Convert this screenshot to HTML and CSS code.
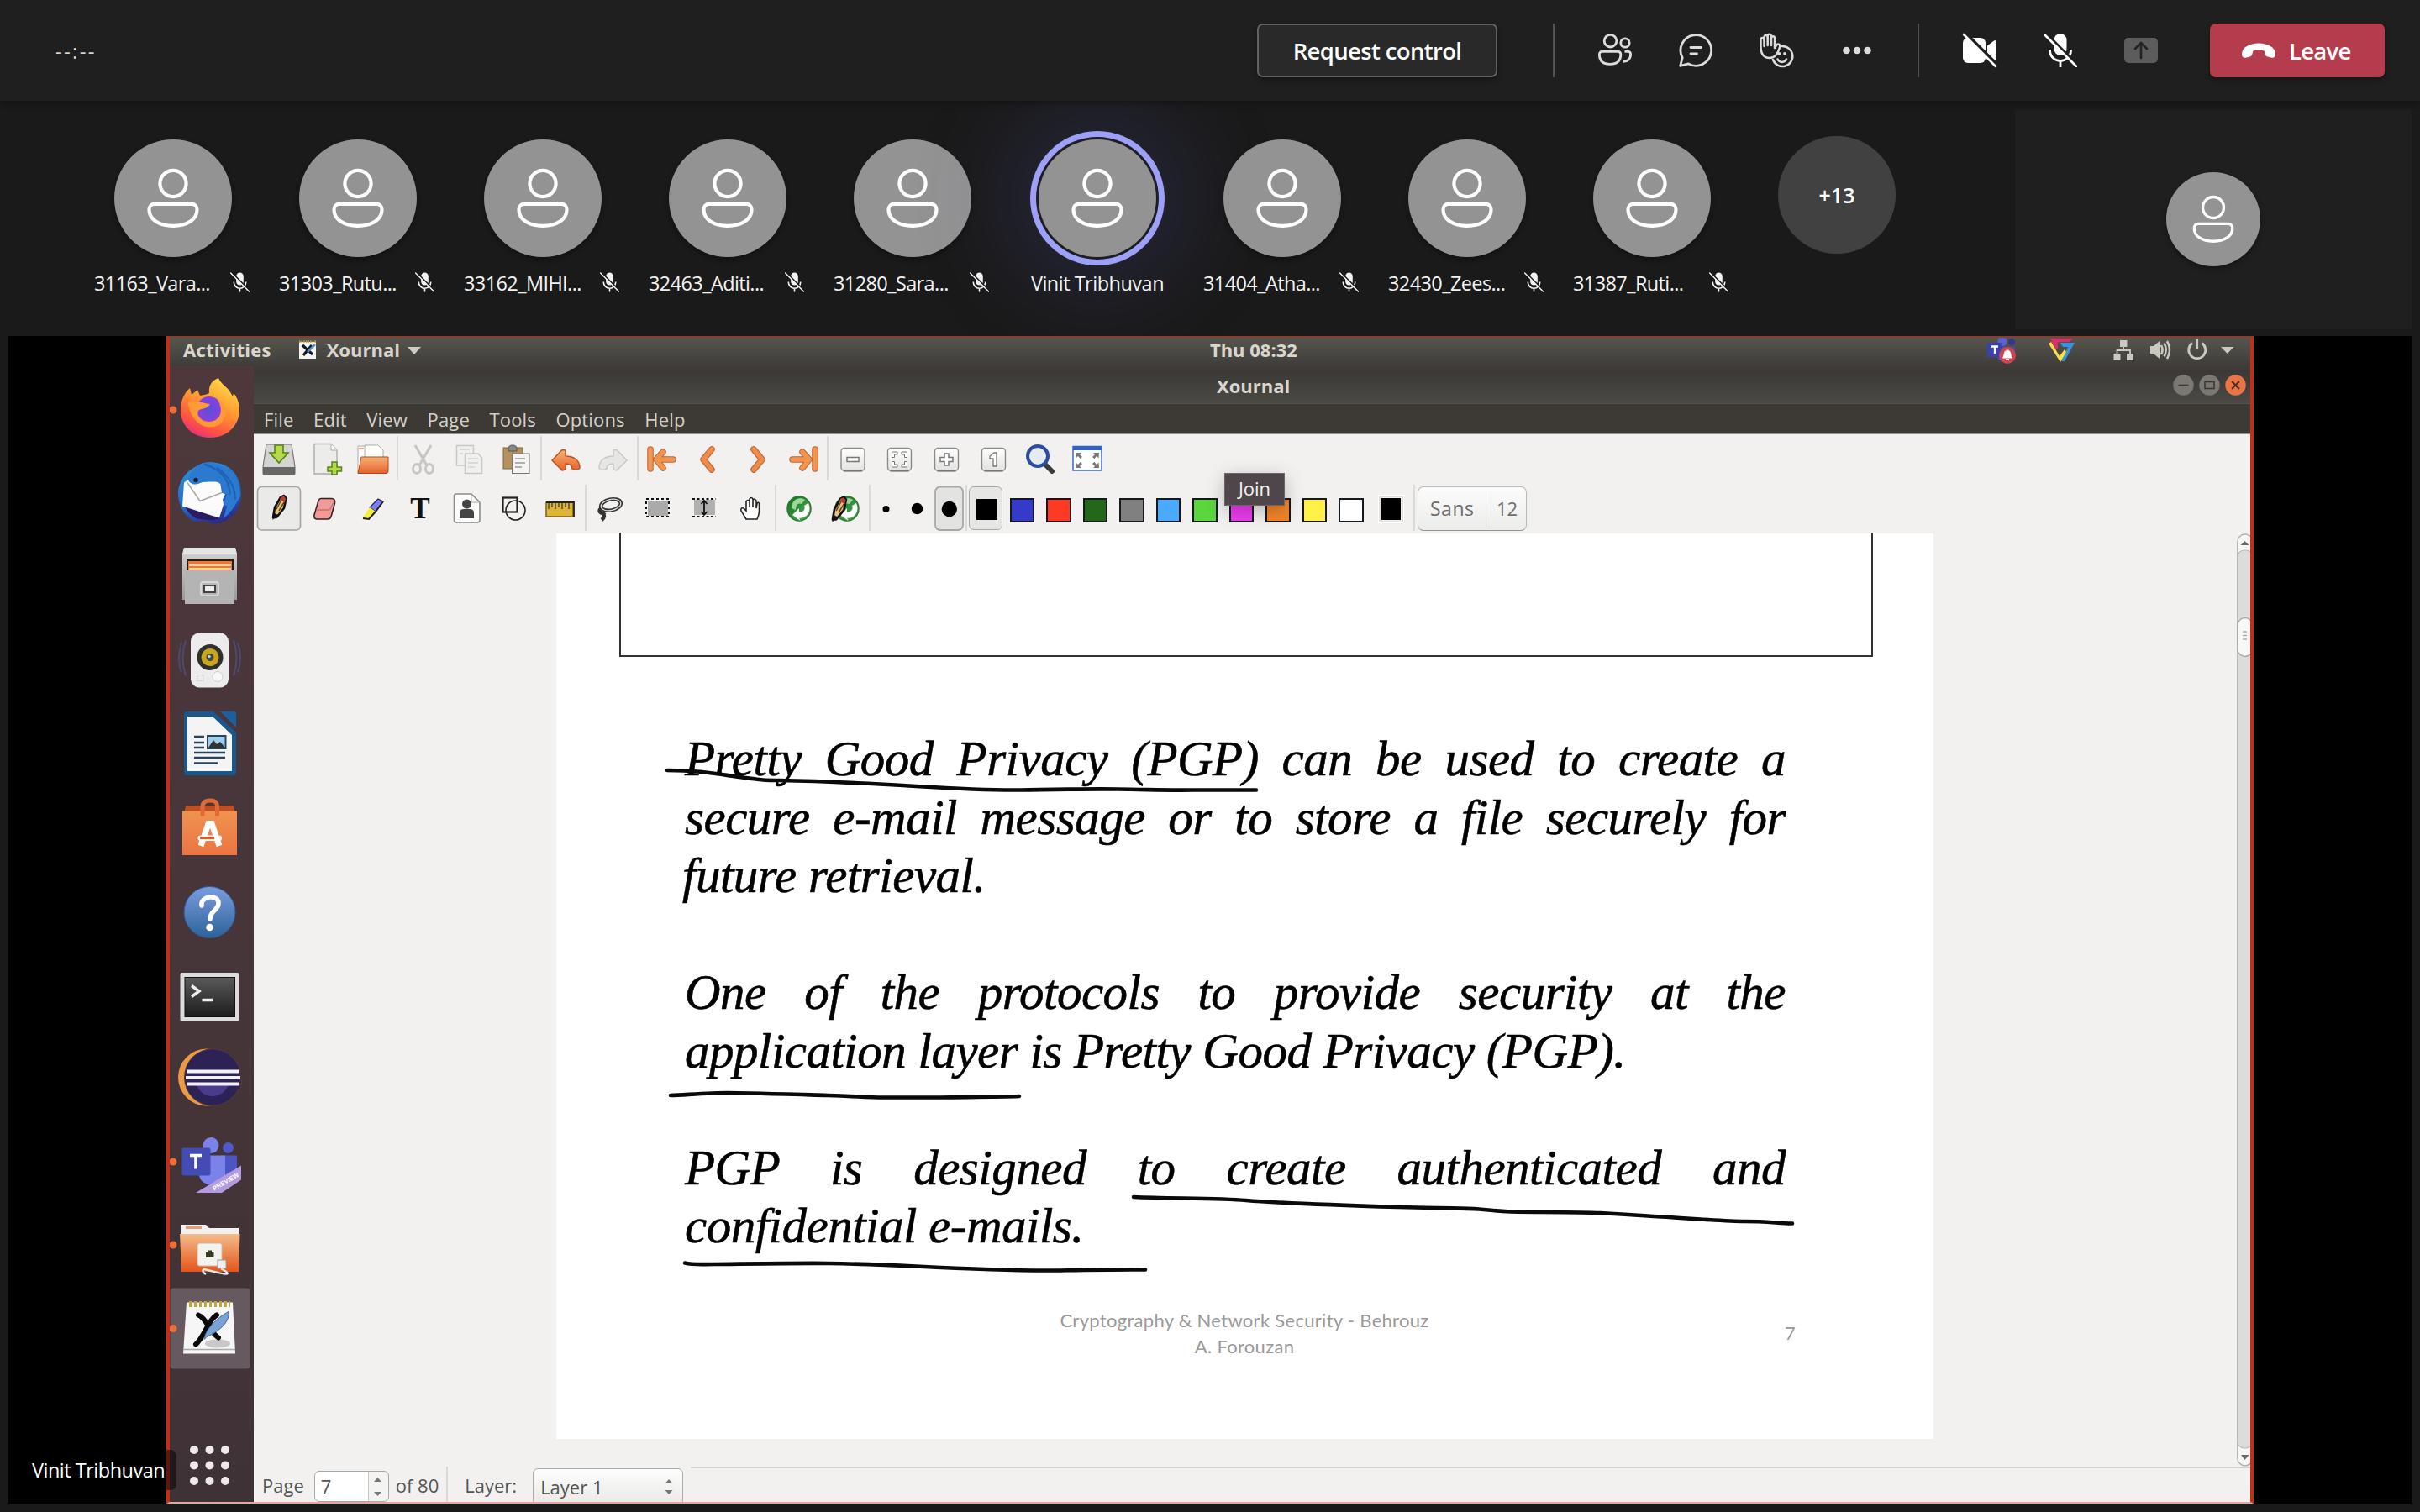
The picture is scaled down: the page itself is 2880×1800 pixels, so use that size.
FILE: index.html
```html
<!DOCTYPE html>
<html lang="en">
<head>
<meta charset="utf-8">
<title>Meeting</title>
<link rel="stylesheet" href="styles.css">
</head>
<body>
<svg class="defs" aria-hidden="true">
  <defs>
    <symbol id="person" viewBox="-70 -70 140 140">
      <g fill="none" stroke="#fff" stroke-width="4.2">
        <circle cx="0" cy="-17.5" r="15.6"/>
        <path d="M-22 6.8H22C26 6.8 28.5 9.5 28.5 13.5C28.5 25 17 32.8 0 32.8S-28.5 25 -28.5 13.5C-28.5 9.5 -26 6.8 -22 6.8Z"/>
      </g>
    </symbol>
    <symbol id="micoff" viewBox="-20 -20 40 40">
      <rect x="-7.5" y="-20" width="15" height="26" rx="7.5" fill="currentColor"/>
      <path d="M-12.5 -1V0A12.5 12.5 0 0 0 12.5 0V-1M0 12.5V20" fill="none" stroke="currentColor" stroke-width="2.8"/>
      <path d="M-17.5 -20.5L21 18" stroke="var(--cut,#1f1f1f)" stroke-width="3.4"/>
      <path d="M-19 -19L19 19" stroke="currentColor" stroke-width="2.6" stroke-linecap="round"/>
    </symbol>
    <linearGradient id="orange" x1="0" y1="0" x2="0" y2="1"><stop offset="0" stop-color="#f9b375"/><stop offset="1" stop-color="#e4622c"/></linearGradient>
    <linearGradient id="folder" x1="0" y1="0" x2="0" y2="1"><stop offset="0" stop-color="#f3bd8c"/><stop offset="1" stop-color="#e5541a"/></linearGradient>
    <linearGradient id="key" x1="0" y1="0" x2="0" y2="1"><stop offset="0" stop-color="#fff"/><stop offset="1" stop-color="#e2e2e0"/></linearGradient>
    <linearGradient id="steel" x1="0" y1="0" x2="0" y2="1"><stop offset="0" stop-color="#d5d5d5"/><stop offset="1" stop-color="#989898"/></linearGradient>
    <linearGradient id="fox" x1=".8" y1="0" x2=".3" y2="1"><stop offset="0" stop-color="#ffe04a"/><stop offset=".45" stop-color="#ff9a30"/><stop offset=".8" stop-color="#ff5343"/><stop offset="1" stop-color="#e8307a"/></linearGradient>
    <radialGradient id="globe"><stop offset="0" stop-color="#5b4fd8"/><stop offset="1" stop-color="#8a3fe0"/></radialGradient>
    <linearGradient id="bird" x1=".2" y1="0" x2=".6" y2="1"><stop offset="0" stop-color="#2b93dc"/><stop offset=".6" stop-color="#2468c6"/><stop offset="1" stop-color="#2a2a8c"/></linearGradient>
    <linearGradient id="ask" x1="0" y1="0" x2="0" y2="1"><stop offset="0" stop-color="#7b9de0"/><stop offset="1" stop-color="#2d6298"/></linearGradient>
    <linearGradient id="term" x1="0" y1="0" x2="0" y2="1"><stop offset="0" stop-color="#5a5a5a"/><stop offset="1" stop-color="#1c1c1c"/></linearGradient>
    <linearGradient id="bag" x1="0" y1="0" x2="0" y2="1"><stop offset="0" stop-color="#f09350"/><stop offset="1" stop-color="#ec7440"/></linearGradient>
    <linearGradient id="leaf" x1="0" y1="0" x2="1" y2="1"><stop offset="0" stop-color="#0c6d1c"/><stop offset="1" stop-color="#58b65a"/></linearGradient>
    <g id="pencil">
      <path d="M341 616L343 604L350 592L354 590L356.500 593L354 605L345 616Z" fill="#e8c27a" stroke="#111" stroke-width="2.600" stroke-linejoin="round"/>
      <path d="M345 606L351 595M348 608L354 598" stroke="#5f4a1c" stroke-width="1.500"/>
      <path d="M350 592L354 590.500L356 593.500L355 598L349 595Z" fill="#b8402c"/>
      <path d="M340.500 619L341 610L347 613Z" fill="#111"/>
    </g>
    <g id="recycle">
      <ellipse cx="951" cy="605.5" rx="14" ry="14.5" fill="url(#leaf)" stroke="#2c7a33" stroke-width="1.5"/>
      <path d="M942 605C942 594 952 591 958 595L954 600C950 598 947 601 947 607Z" fill="#9ad69a"/>
      <path d="M962 599C967 610 958 618 951 616.500L952.500 620L943 613L951 605L951 609.500C956 610 959 606 957 602Z" fill="#fff"/>
    </g>
    <g id="keycap"><rect x="-14" y="-13.5" width="28" height="27" rx="4" fill="url(#key)" stroke="#8b8b89" stroke-width="1.4"/><path d="M-11 13.6H11" stroke="#777" stroke-width="1.8"/></g>
  </defs>
</svg>

<header class="bar">
  <span class="timer t">--:--</span>
  <button class="request"><span class="t">Request control</span></button>
  <i class="rule"></i>
  <div class="tools">
    <svg class="tool" viewBox="-48 -32 96 64"><g fill="none" stroke="#dcdcdc" stroke-width="2.8"><circle cx="-5.5" cy="-11.3" r="7.3"/><circle cx="12" cy="-9" r="5.2"/><path d="M-15.5 1.4H3.5C5.5 1.4 6.8 2.8 6.8 4.8C6.8 12 3 16.4 -6 16.4S-18.6 12 -18.6 4.8C-18.6 2.8 -17.5 1.4 -15.5 1.4Z"/><path d="M11.5 1.4H15.8C17.8 1.4 18.6 2.6 18.6 4.8C18.6 10 15 13.6 9.5 13.4"/></g></svg>
    <svg class="tool" viewBox="-48 -32 96 64"><g fill="none" stroke="#dcdcdc" stroke-width="2.8" stroke-linecap="round" stroke-linejoin="round"><path d="M-18.3 18.3L-15.8 8.6A18.3 18.3 0 1 1 -8.6 15.9Z"/><path d="M-6 -3.5H6.5M-6 4H1.5"/></g></svg>
    <svg class="tool" viewBox="-48 -32 96 64"><g fill="none" stroke="#dcdcdc" stroke-width="2.5" stroke-linecap="round" stroke-linejoin="round"><path d="M-18.5 -5V-12.5C-18.5 -15.8 -14.5 -15.8 -14.5 -12.5V-15.5C-14.5 -19 -10.3 -19 -10.3 -15.5V-17C-10.3 -20 -6 -20 -6 -17V-14.5C-6 -17.5 -2 -17.5 -2 -14.5V-3L0 -6C1.5 -8.5 5 -7.5 4.2 -4.5C2.5 2 -1 9 -8 9C-15.5 9 -18.5 3 -18.5 -5Z"/><path d="M-14.5 -12V-5M-10.3 -15V-6M-6 -15V-6"/><path d="M7 -5A12 12 0 1 1 -4 11"/><path d="M1.5 10.5C3.5 15 10 15 12 10.5"/></g><circle cx="3.5" cy="4" r="1.9" fill="#dcdcdc"/><circle cx="10" cy="4" r="1.9" fill="#dcdcdc"/></svg>
    <svg class="tool" viewBox="-48 -32 96 64"><g fill="#dcdcdc"><circle cx="-12.5" cy="0" r="4.3"/><circle cx="0" cy="0" r="4.3"/><circle cx="12.5" cy="0" r="4.3"/></g></svg>
  </div>
  <i class="rule"></i>
  <div class="tools">
    <svg class="tool" viewBox="-48 -32 96 64"><rect x="-20" y="-15" width="27" height="30" rx="6" fill="#fff"/><path d="M9 -5.5L17 -11.5C18.5 -12.6 20 -12 20 -10V10C20 12 18.5 12.6 17 11.5L9 5.5Z" fill="#fff"/><path d="M-17 -20.5L22 18.5" stroke="#1f1f1f" stroke-width="4"/><path d="M-19 -19L19 19" stroke="#fff" stroke-width="2.6" stroke-linecap="round"/></svg>
    <svg class="tool white" viewBox="-48 -32 96 64"><use href="#micoff" x="-20" y="-20" width="40" height="40"/></svg>
    <svg class="tool" viewBox="-48 -32 96 64"><rect x="-20" y="-15" width="40" height="30" rx="5" fill="#5c5c5c"/><path d="M0 9V-8M-7 -2L0 -9L7 -2" fill="none" stroke="#232323" stroke-width="2.6" stroke-linecap="round" stroke-linejoin="round"/></svg>
  </div>
  <button class="leave"><svg viewBox="-20 -9 40 18"><path d="M0 -8.5C-11 -8.5 -20 -3.5 -20 4.5C-20 8.5 -17.5 9.3 -14.5 8.5L-10.5 7.5C-8.3 6.9 -7.8 5.5 -7.4 3.5L-6.8 .8C-2.5 -.9 2.5 -.9 6.8 .8L7.4 3.5C7.8 5.5 8.3 6.9 10.5 7.5L14.5 8.5C17.5 9.3 20 8.5 20 4.5C20 -3.5 11 -8.5 0 -8.5Z" fill="#fff"/></svg><span class="t">Leave</span></button>
</header>

<section class="strip">
  <div class="people">
    <div class="who"><svg class="face"><use href="#person"/></svg><p><span class="t">31163_Vara...</span><svg class="mic"><use href="#micoff"/></svg></p></div>
    <div class="who"><svg class="face"><use href="#person"/></svg><p><span class="t">31303_Rutu...</span><svg class="mic"><use href="#micoff"/></svg></p></div>
    <div class="who"><svg class="face"><use href="#person"/></svg><p><span class="t">33162_MIHI...</span><svg class="mic"><use href="#micoff"/></svg></p></div>
    <div class="who"><svg class="face"><use href="#person"/></svg><p><span class="t">32463_Aditi...</span><svg class="mic"><use href="#micoff"/></svg></p></div>
    <div class="who"><svg class="face"><use href="#person"/></svg><p><span class="t">31280_Sara...</span><svg class="mic"><use href="#micoff"/></svg></p></div>
    <div class="who speaking"><svg class="face"><use href="#person"/></svg><p><span class="t">Vinit Tribhuvan</span></p></div>
    <div class="who"><svg class="face"><use href="#person"/></svg><p><span class="t">31404_Atha...</span><svg class="mic"><use href="#micoff"/></svg></p></div>
    <div class="who"><svg class="face"><use href="#person"/></svg><p><span class="t">32430_Zees...</span><svg class="mic"><use href="#micoff"/></svg></p></div>
    <div class="who"><svg class="face"><use href="#person"/></svg><p><span class="t">31387_Ruti...</span><svg class="mic"><use href="#micoff"/></svg></p></div>
    <div class="more"><span class="t">+13</span></div>
  </div>
  <div class="self"><svg class="face small"><use href="#person"/></svg></div>
</section>

<main class="stage">
  <div class="screen">
    <div class="panel">
      <b class="act t">Activities</b>
      <svg class="appicon" viewBox="354 404 24 24"><rect x="356" y="407" width="20" height="20" fill="#f4f4f4"/><path d="M356 406.5H376" stroke="#b99a35" stroke-width="2.5" stroke-dasharray="1.6 1"/><path d="M360 411L372 422M371 411L361 423" stroke="#15181c" stroke-width="3.2"/><path d="M375 410L366 419" stroke="#5c8fc9" stroke-width="2.5"/></svg>
      <b class="app t">Xournal</b>
      <svg class="caret" viewBox="0 0 16 9"><path d="M0 0H16L8 9Z" fill="#cfccc6"/></svg>
      <b class="clock t">Thu 08:32</b>
      <svg class="tray" viewBox="2360 402 310 32">
        <circle cx="2383" cy="406.500" r="5.500" fill="#5a62d2"/><circle cx="2394" cy="407" r="4" fill="#34378c"/><path d="M2377 413H2398V424C2398 432 2378 435 2377 424Z" fill="#454cc0"/><rect x="2365" y="408" width="18" height="17" fill="#3a41ad"/><path d="M2370 412.500H2378M2374 412.500V421" stroke="#fff" stroke-width="2.300"/><circle cx="2389" cy="423" r="10" fill="#cc444c"/><path d="M2383.500 426C2386 424 2384 417 2389 417S2392 424 2394.500 426ZM2387 427.500H2391" fill="#fff" stroke="#fff"/>
        <path d="M2440 403H2467L2463 407H2449V415L2446 417Z" fill="#d92f6c"/><path d="M2452 408H2469L2457 430H2453L2461 413H2455Z" fill="#3d8fe0"/><path d="M2438 409L2441 407L2451 424L2457 416L2459 419L2452 431Z" fill="#f7e344"/>
        <g fill="#cbc8c2"><rect x="2523" y="405" width="8.500" height="8"/><rect x="2515.500" y="421" width="8" height="8"/><rect x="2531" y="421" width="8" height="8"/></g><path d="M2527 412V417M2519.500 421V417H2535V421" fill="none" stroke="#cbc8c2" stroke-width="1.800"/>
        <path d="M2559 412H2563L2570 406V427L2563 421H2559Z" fill="#cbc8c2"/><path d="M2572 411Q2575 416.500 2572 422M2575.500 408.500Q2580 416.500 2575.500 424.500M2579 406Q2585 416.500 2579 427" fill="none" stroke="#cbc8c2" stroke-width="2.600"/>
        <path d="M2609 408.500A10 10 0 1 0 2620.500 408.500M2614.700 404V415" fill="none" stroke="#cbc8c2" stroke-width="2.800"/><path d="M2643 413H2658.500L2650.700 421Z" fill="#cbc8c2"/>
      </svg>
    </div>
    <div class="desk">
      <nav class="dock">
        <svg viewBox="202 436 100 99.5"><circle cx="206" cy="488" r="4.500" fill="#e9703a"/><path d="M250 521C229 521 215 507 215 488C215 477 219 468 226 462L228 470L235 464L238 471C241 470 246 470 249 468C248 459 252 453 260 450C263 457 269 460 273 465L277 472L278 468C283 474 285 481 285 488C285 507 270 521 250 521Z" fill="url(#fox)"/><circle cx="249" cy="487" r="15" fill="url(#globe)"/><path d="M224 480C230 475 240 480 250 481C247 487 239 486 236 489C233 495 240 503 250 502C263 501 267 488 258 474C270 480 272 496 262 505C248 514 228 506 224 480Z" fill="#ff9a35"/></svg>
        <svg viewBox="202 535.5 100 99.5"><path d="M246 550C272 548 287 564 287 588C287 609 270 624 252 623L246 620H230C218 612 212 600 212 586C213 572 222 556 246 550Z" fill="url(#bird)"/><path d="M219 597L262 617L252 619L234 617C225 612 220 605 219 597Z" fill="#2a1c62"/><path d="M219 574L225 570L238 573H262L264 586L268 588L265 594L266 600L261 616L217 602Z" fill="#fbfbfb"/><path d="M223 574L238 596L264 586" fill="none" stroke="#aaa" stroke-width="1.600"/><path d="M224 570C230 554 240 547 254 551C276 558 286 570 286 590C280 602 274 610 266 617L270 602L266 600L270 588L264 586C268 576 258 570 246 573C236 573 234 580 225 573Z" fill="#2a7bd0"/><path d="M243 552C262 558 272 568 274 588M258 556C272 566 280 578 280 594" fill="none" stroke="#1f5fb6" stroke-width="2"/><circle cx="233" cy="571" r="2.800" fill="#223"/></svg>
        <svg viewBox="202 635 100 99.5"><path d="M219 652H280L282 660V714H217V660Z" fill="url(#steel)"/><path d="M217 660L219 652H280L282 660Z" fill="#e4e4e2"/><rect x="222" y="665" width="56" height="14" fill="#271c15"/><rect x="224" y="668" width="52" height="11" fill="#e9793a"/><path d="M225 673H275M225 677H275" stroke="#fbd09a" stroke-width="1.800"/><path d="M220 679H279V719H220Z" fill="#b4b4b4"/><rect x="239" y="693" width="21" height="16" rx="3" fill="#b8b8b8" stroke="#d8d8d8" stroke-width="2"/><rect x="243" y="697" width="13" height="8" fill="#eee" stroke="#333" stroke-width="1.800"/></svg>
        <svg viewBox="202 734.500 100 99.500"><path d="M221 762Q214 783 221 804M216 765Q210 783 216 800M278 762Q285 783 278 804M283 765Q289 783 283 800" fill="none" stroke="#4d4a70" stroke-width="2"/><rect x="227" y="753" width="45" height="65" rx="10" fill="#ececec"/><circle cx="250" cy="782" r="15.500" fill="#30312f"/><circle cx="250" cy="782" r="10.500" fill="#c9a51b"/><circle cx="250" cy="782" r="4.500" fill="#454540"/><circle cx="249" cy="781" r="1.800" fill="#ccc"/><circle cx="259" cy="805" r="6" fill="#f8f8f8" stroke="#cfcfcf"/><rect x="235" y="803" width="7" height="7" fill="none" stroke="#d5d5d5"/></svg>
        <svg viewBox="202 834 100 99.500"><path d="M223 847H254L281 872V919Q281 923 277 923H223Q219 923 219 919V851Q219 847 223 847Z" fill="#17588f"/><path d="M262 847H278Q281 847 281 850V866Z" fill="#1c5f9e"/><path d="M223 853H253L276 875V918H223Z" fill="#f4f4f4"/><path d="M231 877H243M231 884H243M231 890H243M231 896H268M231 902H268M231 908.500H259" stroke="#27445f" stroke-width="2.600"/><rect x="247" y="876" width="21.500" height="15" fill="#9dd0ef" stroke="#27445f" stroke-width="2"/><path d="M248 890L254 881L258 886L262 883L268 890Z" fill="#333"/></svg>
        <svg viewBox="202 933.500 100 99.500"><path d="M221 959H278L280 968H219Z" fill="#c14f20"/><rect x="217" y="965" width="65" height="52.500" fill="url(#bag)"/><path d="M241 971V960Q241 952.500 250 952.500T258.500 960V971" fill="none" stroke="#e06a35" stroke-width="5"/><path d="M239 1006.500L248 980H252L261 1006.500" fill="none" stroke="#fff" stroke-width="7"/><rect x="235.500" y="994" width="28.500" height="6.500" rx="3.200" fill="#fff"/><rect x="238" y="995.600" width="17" height="3" fill="#dd5a28"/></svg>
        <svg viewBox="202 1033 100 99.500"><circle cx="249.500" cy="1086" r="30.500" fill="url(#ask)" stroke="#2f5f99"/><path d="M240 1078C238 1066 261 1064 260 1076C259.500 1084 250 1084 250 1094" fill="none" stroke="#fff" stroke-width="5.500" stroke-linecap="round"/><circle cx="249.500" cy="1104" r="4.300" fill="#fff"/></svg>
        <svg viewBox="202 1132.500 100 99.500"><rect x="214.500" y="1157.500" width="70" height="58" rx="2" fill="#dcdcdc"/><rect x="220" y="1163" width="59.500" height="47" fill="url(#term)" stroke="#111"/><path d="M228 1173L237 1179.500L228 1186M240.500 1190H253" fill="none" stroke="#eee" stroke-width="3.400"/></svg>
        <svg viewBox="202 1232 100 99.500"><circle cx="246" cy="1282.500" r="34" fill="#e99b45"/><circle cx="253.500" cy="1282.500" r="34.500" fill="#49363c"/><circle cx="253" cy="1282.500" r="33" fill="#2c2255"/><path d="M234 1292H272Q266 1305 253 1305T234 1292Z" fill="#4c3a8c"/><path d="M222 1275.500H285M221 1283H286M222 1290.500H285" stroke="#f3f0fb" stroke-width="4"/></svg>
        <svg viewBox="202 1331.500 100 99.500"><circle cx="206" cy="1382.500" r="4.500" fill="#e9703a"/><circle cx="251" cy="1363" r="9.500" fill="#7b83eb"/><circle cx="271.500" cy="1366" r="6.500" fill="#5059c9"/><path d="M262 1375H282V1395Q280 1405 268 1404Z" fill="#4c55c4"/><path d="M237 1375H268V1398Q264 1411 251 1410Q238 1408 237 1398Z" fill="#7b83eb"/><rect x="216.500" y="1366" width="34" height="33" rx="2" fill="#434bb5"/><path d="M226 1375H240M233 1375V1391" stroke="#fff" stroke-width="3.600"/><path d="M233 1419.500L287 1387V1404L264 1419.500Z" fill="#b39be0"/><text x="255" y="1417" transform="rotate(-30 255 1417)" class="preview">PREVIEW</text></svg>
        <svg viewBox="202 1431 100 99.500"><circle cx="206" cy="1482" r="4.500" fill="#e9703a"/><path d="M216 1458H245L249 1462H284V1474H216Z" fill="#f3f1ef"/><path d="M221 1461.500H240" stroke="#e79b77" stroke-width="3"/><path d="M214 1469H285.500L284 1514H216Z" fill="url(#folder)"/><rect x="235" y="1480" width="29" height="27" rx="2.500" fill="#f3f3ee" stroke="#c9b9a4"/><path d="M245 1497V1491H247V1488.500H252V1491H254.500V1497Z" fill="#3a3a20"/><rect x="259" y="1500" width="10" height="10" fill="#eee" stroke="#999"/><path d="M263 1510C282 1521 262 1516 243 1511Q239 1513 245 1517" fill="none" stroke="#e8e8e8" stroke-width="2.400"/></svg>
        <svg viewBox="202 1530.500 100 99.500"><rect x="202.500" y="1533" width="95" height="96" rx="4" fill="#665a60"/><circle cx="206" cy="1581" r="4.500" fill="#e9703a"/><path d="M222 1550H277L280 1611H218Z" fill="#f6f6f6"/><path d="M218 1606H280" stroke="#aaa" stroke-width="1.500"/><ellipse cx="259" cy="1599" rx="15" ry="5" fill="#c8c8c8"/><path d="M225 1552H274" stroke="#c2a534" stroke-width="7" stroke-dasharray="3 3"/><path d="M236 1565C245 1568 250 1586 260 1592M258 1565C248 1570 244 1590 233 1600" fill="none" stroke="#090909" stroke-width="6" stroke-linecap="round"/><path d="M272 1561C274 1572 262 1584 246 1591L243 1594C243 1584 258 1568 272 1561Z" fill="#7aa2d2" stroke="#3c64a0"/></svg>
        <svg class="grid" viewBox="202 1695 100 93"><g fill="#f0e9e9"><circle cx="231" cy="1726" r="5"/><circle cx="249.500" cy="1726" r="5"/><circle cx="268" cy="1726" r="5"/><circle cx="231" cy="1744.500" r="5"/><circle cx="249.500" cy="1744.500" r="5"/><circle cx="268" cy="1744.500" r="5"/><circle cx="231" cy="1763" r="5"/><circle cx="249.500" cy="1763" r="5"/><circle cx="268" cy="1763" r="5"/></g></svg>
      </nav>
      <div class="window">
        <div class="title"><b class="t">Xournal</b><span class="wb">
          <svg viewBox="-15.500 -15.500 31 31"><circle r="12.200" fill="#7b7873"/><path d="M-6 0H6" stroke="#3a3835" stroke-width="1.600"/></svg><svg viewBox="-15.500 -15.500 31 31"><circle r="12.200" fill="#7b7873"/><rect x="-5.500" y="-4" width="11" height="8" fill="none" stroke="#3a3835" stroke-width="1.600"/></svg><svg viewBox="-15.500 -15.500 31 31"><circle r="12.200" fill="#ea7443"/><path d="M-4.500 -4.500L4.500 4.500M-4.500 4.500L4.500 -4.500" stroke="#4a2a1c" stroke-width="1.800"/></svg></span></div>
        <div class="menu"><span class="t">File</span><span class="t">Edit</span><span class="t">View</span><span class="t">Page</span><span class="t">Tools</span><span class="t">Options</span><span class="t">Help</span></div>
        <div class="row one">
          <svg width="60" height="58" viewBox="302 517 60 58"><path d="M317 529H347L351 556V563Q351 565 349 565H315Q313 565 313 563V556Z" fill="#d4d4d2" stroke="#777" stroke-width="1.200"/><path d="M313 556H351V565H313Z" fill="#666"/><path d="M327 530H337V539H343L332 551L321 539H327Z" fill="#b7d94c" stroke="#55821a" stroke-width="1.600"/></svg>
          <svg width="53" height="58" viewBox="362 517 53 58"><path d="M374 528.500H394L401 536V564H374Z" fill="#ececea" stroke="#aaa" stroke-width="1.300"/><path d="M394 528.500V536H401" fill="#fff" stroke="#aaa"/><path d="M395 550H401V556H406.500V561H401V565H395V561H390V556H395Z" fill="#b7d94c" stroke="#55821a" stroke-width="1.500"/></svg>
          <svg width="55" height="58" viewBox="415 517 55 58"><path d="M426 531H436V563H426Z" fill="#fff" stroke="#aaa"/><path d="M434 530H450L456 536V550H434Z" fill="#fff" stroke="#aaa"/><path d="M427 534H433" stroke="#e98a4c" stroke-width="1.500"/><path d="M430 544H462V561Q462 563.500 459 563.500H426Z" fill="url(#orange)" stroke="#b5481b"/></svg>
          <i></i>
          <svg width="56" height="58" viewBox="474 517 56 58"><g fill="none" stroke="#c6c6c4" stroke-width="3"><path d="M494 530L508 554M513 530L499 554"/><ellipse cx="496" cy="558" rx="4.500" ry="5.500"/><ellipse cx="511" cy="558" rx="4.500" ry="5.500"/></g></svg>
          <svg width="56" height="58" viewBox="530 517 56 58"><g fill="#f0f0ef" stroke="#c8c8c6" stroke-width="1.500"><path d="M543.500 530.500H563.500V554H543.500Z"/><path d="M553.500 540H569L573.500 545V563.500H553.500Z"/></g><path d="M547 535H559M547 540H551M557 546H569M557 551H569M557 556H565" stroke="#d2d2d0" stroke-width="1.500"/></svg>
          <svg width="55" height="58" viewBox="586 517 55 58"><rect x="599" y="533" width="23" height="25" fill="#b5915c" stroke="#84663a"/><path d="M605 534Q605 530 610 530T615 534V537H605Z" fill="#888" stroke="#555"/><rect x="609.500" y="540" width="20.500" height="23.500" fill="#f4f4f4" stroke="#777"/><path d="M613 546H625M613 551H625M613 556H621" stroke="#999" stroke-width="1.500"/></svg>
          <i></i>
          <svg width="56" height="58" viewBox="645 517 56 58"><path d="M657 548L669 535.500L673 536V543C684 543 690 549 690 557Q688 561 681 558C681 554 678 552 673 552V559L669 560Z" fill="url(#orange)" stroke="#bd541f" stroke-width="1.500" stroke-linejoin="round"/></svg>
          <svg width="55" height="58" viewBox="701 517 55 58"><path d="M746 548L734 535.500L730 536V543C719 543 713 549 713 557Q715 561 722 558C722 554 725 552 730 552V559L734 560Z" fill="#e6e6e4" stroke="#c8c8c6" stroke-width="1.500" stroke-linejoin="round"/></svg>
          <i></i>
          <svg width="58" height="58" viewBox="760 517 58 58"><g fill="none" stroke-linecap="round" stroke-linejoin="round"><path d="M774 535V558M781 547L789 538M781 547L789 557M782 547H801" stroke="#c4622c" stroke-width="7.500"/><path d="M774 535V558M781 547L789 538M781 547L789 557M782 547H801" stroke="#f09550" stroke-width="5.500"/></g></svg>
          <svg width="53" height="58" viewBox="818 517 53 58"><g fill="none" stroke-linecap="round" stroke-linejoin="round"><path d="M847 535L837 547L847 559" stroke="#c4622c" stroke-width="7.500"/><path d="M847 535L837 547L847 559" stroke="#ee8b4a" stroke-width="5.500"/></g></svg>
          <svg width="55" height="58" viewBox="871 517 55 58"><g fill="none" stroke-linecap="round" stroke-linejoin="round"><path d="M897 535L907 547L897 559" stroke="#c4622c" stroke-width="7.500"/><path d="M897 535L907 547L897 559" stroke="#ee8b4a" stroke-width="5.500"/></g></svg>
          <svg width="56" height="58" viewBox="926 517 56 58"><g fill="none" stroke-linecap="round" stroke-linejoin="round"><path d="M970 535V558M963 547L955 538M963 547L955 557M962 547H943" stroke="#c4622c" stroke-width="7.500"/><path d="M970 535V558M963 547L955 538M963 547L955 557M962 547H943" stroke="#f09550" stroke-width="5.500"/></g></svg>
          <i></i>
          <svg width="56" height="58" viewBox="986 517 56 58"><use href="#keycap" x="1015" y="547"/><rect x="1008" y="544.500" width="14" height="5" fill="#fff" stroke="#777" stroke-width="1.500"/></svg>
          <svg width="56" height="58" viewBox="1042 517 56 58"><use href="#keycap" x="1070.500" y="547"/><path d="M1061.500 544.500V538H1068V541H1064.500V544.500ZM1079.500 544.500V538H1073V541H1076.500V544.500ZM1061.500 549.500V556H1068V553H1064.500V549.500ZM1079.500 549.500V556H1073V553H1076.500V549.500Z" fill="#fff" stroke="#777" stroke-width="1"/></svg>
          <svg width="56" height="58" viewBox="1098 517 56 58"><use href="#keycap" x="1126.500" y="547"/><path d="M1124 540H1129V544.500H1134V549.500H1129V554H1124V549.500H1119V544.500H1124Z" fill="#fff" stroke="#777" stroke-width="1.500"/></svg>
          <svg width="55" height="58" viewBox="1154 517 55 58"><use href="#keycap" x="1182.500" y="547"/><path d="M1178 543L1183 539H1186V555H1182V546H1178Z" fill="#fff" stroke="#777" stroke-width="1.300"/></svg>
          <svg width="56" height="58" viewBox="1209 517 56 58"><path d="M1244 553L1252 561" stroke="#3a3a3a" stroke-width="6" stroke-linecap="round"/><circle cx="1235" cy="543" r="12" fill="#e6eaf2" stroke="#2b4da0" stroke-width="4"/></svg>
          <svg width="56" height="58" viewBox="1265 517 56 58"><rect x="1277" y="531.500" width="34" height="28.500" fill="#fff" stroke="#3d6cc0" stroke-width="1.500"/><rect x="1277" y="531" width="34" height="5" fill="#2f62c4"/><path d="M1280 539H1287L1285 541L1288 544L1285.500 546L1283 543L1280.500 545.500ZM1308 539H1301L1303 541L1300 544L1302.500 546L1305 543L1307.500 545.500ZM1280 557H1287L1285 555L1288 552L1285.500 550L1283 553L1280.500 550.500ZM1308 557H1301L1303 555L1300 552L1302.500 550L1305 553L1307.500 550.500Z" fill="#777"/></svg>
        </div>
        <div class="row two">
          <svg width="60" height="60" viewBox="302 575 60 60"><rect x="306.500" y="579.500" width="51" height="51.500" rx="5" fill="#eaeae8" stroke="#a3a3a1" stroke-width="1.600"/><use href="#pencil" x="-16"/></svg>
          <svg width="53" height="60" viewBox="362 575 53 60"><path d="M382 593.500H395Q399.500 594 398.500 599L394 615Q393 618 390 618H377Q373 617.500 374 613L379 596Q380 593.500 382 593.500Z" fill="#f19a9a" stroke="#3a2222" stroke-width="1.600"/><path d="M376 607H391Q393 607 394 604L398 597" fill="none" stroke="#c96f6f" stroke-width="1.300"/></svg>
          <svg width="57" height="60" viewBox="415 575 57 60"><path d="M450 594L456 597L447 609L440 604Z" fill="#7d7df8" stroke="#224" stroke-width="1.200"/><path d="M440 604L447 609L439 618L432 616Z" fill="#f6f03c"/><path d="M456 597L447 609L439 618L432 617" fill="none" stroke="#222" stroke-width="2"/></svg>
          <svg width="53" height="60" viewBox="472 575 53 60"><text x="500" y="617" class="bigt">T</text></svg>
          <svg width="58" height="60" viewBox="525 575 58 60"><path d="M543 588H561L571 598V619Q571 622 568 622H543Q540.500 622 540.500 619V591Q540.500 588 543 588Z" fill="#fcfcfb" stroke="#8b8b89" stroke-width="1.600"/><path d="M561 588V598H571" fill="none" stroke="#aaa"/><circle cx="555.500" cy="600" r="5.500" fill="#444"/><path d="M547 617V611Q547 606 552 606H559Q564 606 564 611V617Z" fill="#444"/></svg>
          <svg width="54" height="60" viewBox="583 575 54 60"><g fill="none" stroke="#222"><rect x="598.500" y="592.500" width="17" height="17" stroke-width="2.200"/><circle cx="613.500" cy="607.500" r="11.500" stroke-width="1.600"/></g></svg>
          <svg width="57" height="60" viewBox="637 575 57 60"><rect x="650" y="598" width="32" height="17" fill="#dcb43a" stroke="#7c6216" stroke-width="1.500"/><path d="M650 598H683V616" fill="none" stroke="#222" stroke-width="1.800"/><path d="M653 599V606M657 599V604M661 599V606M665 599V604M669 599V606M673 599V604M677 599V606" stroke="#4a3a08" stroke-width="1.300"/></svg>
          <i></i>
          <svg width="56" height="60" viewBox="698 575 56 60"><g fill="none" stroke="#333" stroke-width="4.500"><ellipse cx="727" cy="601" rx="12" ry="6.500" transform="rotate(-12 727 601)"/><path d="M716 605C710 608 716 613 720 610M717 610Q721 615 716 619"/></g><g fill="none" stroke="#ddd" stroke-width="1.200"><ellipse cx="727" cy="601" rx="12" ry="6.500" transform="rotate(-12 727 601)"/></g></svg>
          <svg width="56" height="60" viewBox="754 575 56 60"><rect x="771" y="596" width="24" height="18" fill="#aaa"/><rect x="769" y="594" width="27" height="21" fill="none" stroke="#111" stroke-width="2" stroke-dasharray="3 3"/></svg>
          <svg width="56" height="60" viewBox="810 575 56 60"><rect x="826" y="595" width="25" height="18" fill="#b0b0b0"/><path d="M824 594H852M824 615H852" stroke="#111" stroke-width="2" stroke-dasharray="3 2.500"/><path d="M838 596V613M834.500 600L838 596L841.500 600M834.500 609L838 613L841.500 609" fill="none" stroke="#111" stroke-width="1.800"/></svg>
          <svg width="54" height="60" viewBox="866 575 54 60"><path d="M888 618L882 608Q881 604 885 605L888 608V597Q890 594 892 597V604V594Q894 591 896 594V604V595Q898 593 900 596V605L901 599Q903 597 903.500 600V609Q903 614 901 618Z" fill="#fff" stroke="#222" stroke-width="1.600"/></svg>
          <i></i>
          <svg width="54" height="60" viewBox="924 575 54 60"><use href="#recycle"/></svg>
          <svg width="54" height="60" viewBox="978 575 54 60"><use href="#recycle" x="57"/><g transform="translate(581 -16) scale(1.03)"><use href="#pencil" x="57"/></g></svg>
          <i></i>
          <svg width="36" height="60" viewBox="1036 575 36 60"><circle cx="1054.500" cy="606" r="4"/></svg>
          <svg width="38" height="60" viewBox="1072 575 38 60"><circle cx="1091.500" cy="605.500" r="6.700"/></svg>
          <svg width="38" height="60" viewBox="1110 575 38 60"><rect x="1113" y="579.500" width="33" height="51.500" rx="6" fill="#e3e3e1" stroke="#a8a8a6" stroke-width="1.800"/><circle cx="1129.800" cy="606" r="9.200"/></svg>
          <i class="thin"></i>
          <span class="pick"><b></b></span>
          <span class="sw c1"></span><span class="sw c2"></span><span class="sw c3"></span><span class="sw c4"></span><span class="sw c5"></span><span class="sw c6"></span><span class="sw c7"></span><span class="sw c8"></span><span class="sw c9"></span><span class="sw c10"></span>
          <span class="current"><b></b></span>
          <i></i>
          <span class="font"><span class="fam"><span class="t">Sans</span></span><span class="size"><span class="t">12</span></span></span>
          <span class="tip"><span class="t">Join</span></span>
        </div>
        <div class="canvas">
          <article class="page">
            <div class="figure"></div>
            <p class="j">Pretty Good Privacy (PGP) can be used to create a</p>
            <p class="j">secure e-mail message or to store a file securely for</p>
            <p class="out">future retrieval.</p>
            <p>&nbsp;</p>
            <p class="j">One of the protocols to provide security at the</p>
            <p>application layer is Pretty Good Privacy (PGP).</p>
            <p>&nbsp;</p>
            <p class="j">PGP is designed to create authenticated and</p>
            <p>confidential e-mails.</p>
            <footer><div><span class="t">Cryptography &amp; Network Security - Behrouz</span><br><span class="t">A. Forouzan</span></div><em>7</em></footer>
            <svg class="ink" viewBox="662 635 1640 1078"><g fill="none" stroke="#0a0a0a" stroke-width="4.600" stroke-linecap="round" stroke-linejoin="round"><path d="M794 917C830 917 851 921 880 925S910 929 928 929C990 930 1040 933 1090 936S1180 941 1215 940.500S1290 939 1330 939.500S1387 941 1420 940.500H1495"/><path d="M798 1304C820 1303 846 1301 866 1301S950 1303 985 1304S1030 1306.500 1052 1306.500H1119C1150 1306 1190 1306 1213 1305"/><path d="M1349 1425C1390 1427 1450 1426 1483 1429S1600 1435 1664 1437S1740 1438 1760 1439.500S1780 1442 1798 1442.500S1880 1443 1904 1444S1930 1446 1961 1447.500S2050 1454 2076 1454S2115 1456 2133 1456.500"/><path d="M815 1503.500C825 1506 835 1505 850 1505S950 1503.500 985 1504S1060 1506 1090 1507.500S1210 1513 1253 1512.500S1330 1511 1363 1511.500"/></g></svg>
          </article>
          <div class="scroll"><svg viewBox="0 0 16 1111"><rect x=".8" y="1" width="18" height="1109" rx="9" fill="#f6f6f5" stroke="#b0b0ae" stroke-width="1.400"/><rect x=".8" y="20" width="18" height="1069" rx="8" fill="#dcdcda" stroke="#b8b8b6" stroke-width="1.200"/><rect x=".8" y="100.500" width="18" height="46" rx="9" fill="#f8f8f7" stroke="#a9a9a7" stroke-width="1.400"/><path d="M7 117H12M7 121.500H12M7 126H12" stroke="#aaa" stroke-width="1.400"/><path d="M4.500 14L9.500 9L14.500 14Z M5 1097H14.500L9.500 1103Z" fill="#6a6a68"/></svg></div>
        </div>
        <div class="status">
          <span class="t pg">Page</span>
          <span class="spin"><b>7</b><svg viewBox="0 0 25 36"><path d="M8 12L12.500 7L17 12ZM8 24H17L12.500 29Z" fill="#777"/></svg></span>
          <span class="t of">of 80</span><i></i>
          <span class="t ly">Layer:</span>
          <span class="combo"><span class="t">Layer 1</span><svg viewBox="0 0 12 24"><path d="M1.500 8L6 3L10.500 8ZM1.500 16H10.500L6 21Z" fill="#777"/></svg></span>
        </div>
      </div>
    </div>
  </div>
  <div class="tag"><span class="t">Vinit Tribhuvan</span></div>
</main>
</body>
</html>
```
FILE: styles.css
```css
* { box-sizing: border-box; }
body { margin: 0; width: 2880px; height: 1800px; overflow: hidden; display: flex; flex-direction: column; background: #1a1a1a; color: #fff; font-family: "Open Sans", "Noto Sans", sans-serif; }
p { margin: 0; }
svg { display: block; flex: none; }
.defs { position: absolute; width: 0; height: 0; }
.t { white-space: nowrap; }
button { font: inherit; color: inherit; margin: 0; padding: 0; }

/* meeting toolbar */
.bar { height: 120px; flex: none; display: flex; align-items: center; padding: 0 42px 0 66px; background: #1f1f1f; box-shadow: 0 2px 8px rgba(0,0,0,.35); z-index: 2; }
.timer { font-size: 24px; color: #d6d6d6; letter-spacing: 2.3px; }
.request { margin-left: auto; width: 286px; height: 64px; border: 2px solid #616161; border-radius: 7px; background: #292929; font-size: 27.5px; font-weight: 600; letter-spacing: -.65px; box-shadow: 0 3px 6px rgba(0,0,0,.35); }
.rule { width: 2px; height: 64px; background: #525252; }
.request + .rule { margin-left: 66px; }
.rule { margin-right: 24px; }
.tools { display: flex; }
.tools + .rule { margin-left: 24px; }
.tool { width: 96px; height: 64px; }
.white { color: #fff; }
.leave { width: 208px; height: 64px; margin-left: 34px; border: 0; border-radius: 7px; background: #b53c4d; display: flex; align-items: center; padding-left: 38px; gap: 16px; font-size: 27.5px; font-weight: 600; letter-spacing: -.75px; box-shadow: 0 3px 6px rgba(0,0,0,.35); }
.leave svg { width: 40px; height: 18px; }

/* participants */
.strip { height: 280px; flex: none; display: flex; justify-content: space-between; padding: 0 10px 0 96px; overflow: hidden; }
.people { display: flex; }
.who { width: 220px; padding-top: 46px; display: flex; flex-direction: column; align-items: center; }
.face { width: 140px; height: 140px; border-radius: 50%; background: #939393; box-shadow: 0 3px 6px rgba(0,0,0,.35); }
.who p { width: 220px; padding: 0 19px 0 16px; margin-top: 13px; height: 34px; display: flex; align-items: center; justify-content: space-between; font-size: 23.5px; letter-spacing: -.6px; color: #f2f2f2; line-height: 36px; --cut: #1a1a1a; }
.who .t { padding-top: 2px; }
.mic { width: 23px; height: 24px; }
.who.speaking p { padding: 0; justify-content: center; letter-spacing: -.5px; }
.speaking .face { box-shadow: 0 0 0 3px #1d1d22, 0 0 0 10px #9ea0f8, 0 0 120px 40px rgba(92,92,190,.2); }
.more { width: 140px; height: 140px; margin: 42px 0 0 40px; border-radius: 50%; background: #414141; display: flex; align-items: center; justify-content: center; font-size: 25px; font-weight: 600; }
.self { width: 472px; height: 262px; margin-top: 10px; background: #1f1f1f; display: flex; align-items: center; justify-content: center; }
.small { width: 112px; height: 112px; }

/* shared screen */
.stage { position: relative; height: 1390px; flex: none; margin: 0 10px; padding-left: 188px; background: #000; }
.screen { width: 2484px; height: 1390px; display: flex; flex-direction: column; border: 4px solid #c12e1b; border-top: 2px solid #843f31; border-bottom: 2px solid #e2a79f; background: #3c3835; color: #dad6cf; font-size: 22px; }
.panel { height: 38px; flex: none; display: flex; padding-left: 16px; line-height: 29px; background: linear-gradient(#59544d, #464540 60%, #3d3936); }
.act { letter-spacing: .25px; }
.appicon { width: 24px; height: 24px; margin: 2px 0 0 31px; }
.app { margin-left: 11px; }
.caret { width: 16px; height: 9px; margin: 11px 0 0 9px; }
.clock { margin-left: 939px; }
.tray { width: 310px; height: 32px; margin-left: auto; margin-right: 8px; }
.desk { flex: 1; min-height: 0; display: flex; }
.dock { width: 100px; flex: none; display: flex; flex-direction: column; margin-top: -4px; background: linear-gradient(#4e383c, #3f3236); overflow: hidden; }
.dock svg { width: 100px; height: 99.5px; }
.dock .grid { height: 93px; margin-top: auto; }
.preview { font: bold 7.5px "Liberation Sans", sans-serif; fill: #fff; }
.window { flex: 1; min-width: 0; display: flex; flex-direction: column; background: #f2f1ef; }
.title { height: 41px; flex: none; display: flex; align-items: center; padding: 0 2px 4px 1146px; background: linear-gradient(#3c3835, #3d3b37 20%, #4c4a45 96%, #55534d); }
.wb { margin-left: auto; display: flex; }
.wb svg { width: 31px; height: 31px; }
.menu { height: 36px; flex: none; display: flex; gap: 23.6px; padding-left: 12px; line-height: 36px; letter-spacing: .15px; background: #3d3a36; color: #d4d0c8; border-bottom: 1px solid #9a9894; }
.row { display: flex; flex: none; position: relative; }
.one { height: 58px; }
.two { height: 60px; }
.row > i { width: 4px; margin: 2px 0 3px; border-right: 2px solid #dbdad8; border-left: 1px solid transparent; }
.row > .thin { width: 3px; }
.bigt { font: bold 35px "Liberation Serif", serif; fill: #111; text-anchor: middle; }
.pick { width: 44px; padding: 4px 2px; }
.pick b { display: block; width: 40px; height: 52px; border-radius: 6px; border: 1.8px solid #a8a8a6; background: linear-gradient(#000, #000) 8px 14px / 25px 25px no-repeat #e6e6e4; }
.sw { width: 43.5px; display: flex; }
.sw::before { content: ""; width: 25.5px; height: 25px; margin: 18px 0 0 6.5px; border: 2px solid #15181c; background: var(--c); }
.c1 { --c: #343acb; } .c2 { --c: #ff3a24; } .c3 { --c: #24661a; } .c4 { --c: #808080; } .c5 { --c: #49aaff; }
.c6 { --c: #5cd63d; } .c7 { --c: #ee3bee; } .c8 { --c: #f28529; } .c9 { --c: #fff04a; } .c10 { --c: #fff; }
.current { width: 50px; padding: 15px 0 0 11px; }
.current b { display: block; width: 29px; height: 32px; border: 2px solid #e0dfdd; background: #000 content-box; padding: 1px; box-shadow: 0 0 0 1px #fff; }
.font { margin: 4px 0 3px 3px; width: 130px; border: 1.6px solid #bab9b7; border-bottom-color: #979694; border-radius: 7px; display: flex; background: linear-gradient(#fcfcfc, #ececeb); color: #6e6e6e; line-height: 50px; }
.fam { width: 81px; padding-left: 14px; margin: 4px 0; line-height: 42px; font-size: 23px; letter-spacing: .5px; border-right: 1px solid #d9d8d6; }
.size { padding-left: 12px; }
.tip { position: absolute; left: 1155px; top: -12px; width: 72px; height: 39px; border: 1px solid #6c6468; background: #4e464a; color: #f4f4f4; display: flex; align-items: center; justify-content: center; padding-bottom: 4px; box-shadow: 0 6px 22px rgba(0,0,0,.25); }
.canvas { height: 1111px; flex: none; display: flex; justify-content: space-between; padding-left: 360px; }
.page { position: relative; width: 1639px; height: 1078px; background: #fff; color: #000; font: italic 59px/69.5px "Liberation Serif", serif; letter-spacing: -.5px; padding: 0 176px 0 153px; }
.figure { height: 147px; margin: 0 -104px 87px -78px; border: 2px solid #333; border-top: 0; }
.page p { height: 69.5px; white-space: nowrap; -webkit-text-stroke: .6px #000; }
.page .j { text-align-last: justify; white-space: normal; }
.page .out { margin-left: -3px; margin-right: 3px; }
.page footer { display: flex; margin-top: 61px; font: 22px/31px Lato, Carlito, sans-serif; letter-spacing: .3px; color: #999; text-align: center; }
.page footer div { width: 446px; margin-left: 443px; }
.page em { font-style: normal; margin: 15px -12px 0 auto; }
.ink { position: absolute; left: 0; top: 0; width: 1640px; height: 1078px; }
.scroll, .scroll svg { width: 16px; height: 1111px; }
.status { flex: 1; min-height: 0; display: flex; color: #555; line-height: 45px; overflow: hidden; padding-left: 10px; background: linear-gradient(#d3d2d0, #d3d2d0) 520px 0 / 1860px 2px no-repeat; }
.spin { margin: 5px 0 0 12px; width: 89px; height: 37px; border: 1.6px solid #a9a8a6; border-radius: 6px; display: flex; justify-content: space-between; background: linear-gradient(90deg, #fff 63px, #c8c7c5 63px 64px, #f4f4f3 64px); line-height: 35px; }
.spin b { font-weight: 400; padding-left: 7px; }
.spin svg { width: 25px; height: 36px; }
.of { margin-left: 8px; }
.status i { width: 2px; margin-left: 9px; background: #dbdad8; }
.ly { margin-left: 20px; }
.combo { margin: 2px 0 0 19px; width: 179px; height: 44px; border: 1.6px solid #aeadab; border-radius: 6px; display: flex; align-items: center; justify-content: space-between; padding: 0 10px 0 8px; background: linear-gradient(#fdfdfd, #e9e9e7); }
.combo svg { width: 12px; height: 24px; }
.tag { position: absolute; left: 14px; top: 1326px; width: 186px; height: 48px; border-radius: 7px; background: rgba(0,0,0,.5); font-size: 23.5px; letter-spacing: -.5px; line-height: 49px; padding-left: 14px; }
```
